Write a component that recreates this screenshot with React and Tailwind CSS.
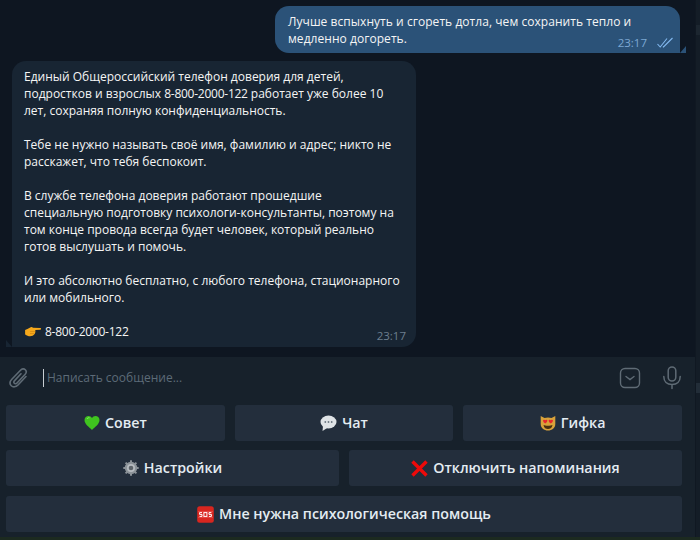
const font = { fontFamily: '"Open Sans", sans-serif' };

function Heart() {
  return (
    <svg width="16" height="16" viewBox="0 0 16 16" className="shrink-0">
      <path d="M8 15 C5 12 0.5 9 0.5 5 C0.5 2.5 2.5 1 4.5 1 C6 1 7.2 1.8 8 3 C8.8 1.8 10 1 11.5 1 C13.5 1 15.5 2.5 15.5 5 C15.5 9 11 12 8 15Z" fill="#3fc41f" />
      <path d="M3 4 C3.5 3 4.5 2.6 5.5 2.8" stroke="#8fe870" strokeWidth="1" fill="none" />
    </svg>
  );
}

function Speech() {
  return (
    <svg width="17" height="17" viewBox="0 0 17 17" className="shrink-0">
      <ellipse cx="8.5" cy="7" rx="8" ry="6.5" fill="#dfe3e6" />
      <path d="M3 11 L2.5 16 L8 12.5Z" fill="#dfe3e6" />
      <circle cx="5.3" cy="7" r="0.9" fill="#6b7680" />
      <circle cx="8.5" cy="7" r="0.9" fill="#6b7680" />
      <circle cx="11.7" cy="7" r="0.9" fill="#6b7680" />
    </svg>
  );
}

function Cat() {
  return (
    <svg width="16" height="16" viewBox="0 0 16 16" className="shrink-0">
      <path d="M0.7 1 L4.5 3 C6.5 2.3 9.5 2.3 11.5 3 L15.3 1 L15.3 9 C15.3 13 12 15.5 8 15.5 C4 15.5 0.7 13 0.7 9Z" fill="#d9a23a" />
      <path d="M3 5.5 a1.3 1.3 0 0 1 2.2 -0.3 a1.3 1.3 0 0 1 2.2 0.3 C7.4 7 5.7 8 5.2 8.6 C4.7 8 3 7 3 5.5Z" fill="#e8262b" />
      <path d="M8.6 5.5 a1.3 1.3 0 0 1 2.2 -0.3 a1.3 1.3 0 0 1 2.2 0.3 C13 7 11.3 8 10.8 8.6 C10.3 8 8.6 7 8.6 5.5Z" fill="#e8262b" />
      <path d="M3.5 10 C5.5 11 10.5 11 12.5 10 C12 13 10 14 8 14 C6 14 4 13 3.5 10Z" fill="#4a3010" />
    </svg>
  );
}

function Gear() {
  return (
    <svg width="16" height="16" viewBox="0 0 16 16" className="shrink-0">
      <circle cx="8" cy="8" r="6.2" fill="#8b9298" />
      <g stroke="#8b9298" strokeWidth="2">
        <path d="M8 0.3 V15.7 M0.3 8 H15.7 M2.6 2.6 L13.4 13.4 M13.4 2.6 L2.6 13.4" />
      </g>
      <circle cx="8" cy="8" r="4" fill="#b6bbc0" />
      <circle cx="8" cy="8" r="2.3" fill="#5c6369" />
    </svg>
  );
}

function Cross() {
  return (
    <svg width="17" height="17" viewBox="0 0 17 17" className="shrink-0">
      <path d="M1.5 1.5 L15.5 15.5 M15.5 1.5 L1.5 15.5" stroke="#ee0a0a" strokeWidth="3.4" />
    </svg>
  );
}

function Sos() {
  return (
    <svg width="17" height="17" viewBox="0 0 17 17" className="shrink-0">
      <rect x="0.2" y="0.2" width="16.6" height="16.6" rx="2.5" fill="#d8261f" />
      <path d="M1 5.6 H16 M1 11.4 H16" stroke="#f0605a" strokeWidth="0.6" />
      <g stroke="#fff" strokeWidth="1" fill="none">
        <path d="M5 6.6 H2.6 V8.4 H5 V10.4 H2.5" />
        <rect x="6.9" y="6.6" width="3" height="3.8" />
        <path d="M14.4 6.6 H12 V8.4 H14.4 V10.4 H11.9" />
      </g>
    </svg>
  );
}

function Pointing() {
  return (
    <svg width="18" height="13" viewBox="0 0 18 14" className="shrink-0">
      <path d="M0.5 5.5 C2 4.5 4 4 5.5 3 C7 2 8 2 9 3 L17 3.2 C18 3.4 18 4.8 17 5 L11.5 5.3 C11.7 7 11.5 9 10.5 10 C9.5 11.5 7 12.5 4.5 12 C2.5 11.6 0.8 10.8 0.5 10Z" fill="#f5a81c" />
      <path d="M6 7 H11 M5.8 9.2 H10.4" stroke="#c97f0c" strokeWidth="0.6" />
    </svg>
  );
}

function KeyButton({ icon, label, className = "" }) {
  return (
    <button className={`flex h-9 min-w-0 items-center justify-center gap-[5px] rounded-[3px] bg-[#232e3c] text-[14.25px] leading-none font-semibold text-[#e4ecf2] ${className}`}>
      {icon}
      <span>{label}</span>
    </button>
  );
}

export default function App() {
  return (
    <div className="flex h-[540px] w-[700px] flex-col overflow-hidden bg-[#17212b]" style={font}>
      <div className="flex min-h-0 flex-1">
        <div className="flex min-w-0 flex-1 flex-col">
          <div className="flex h-[357px] flex-col bg-[#0e1621] pt-[6px] pr-[15px] pl-3">
            <div className="flex justify-end">
              <div className="relative h-[47px] w-[405px] rounded-[14px] rounded-br-none bg-[#2b5278] pt-[7px] pl-[13px] text-[12px] leading-[17px] tracking-[0.05px] text-[#f5f5f5]">
                <p className="whitespace-nowrap">Лучше вспыхнуть и сгореть дотла, чем сохранить тепло и<br />медленно догореть.</p>
                <div className="absolute right-[7px] bottom-[2px] flex items-center gap-[10px] tracking-normal">
                  <span className="text-[11.5px] leading-[16px] text-[#7da8d3]">23:17</span>
                  <svg className="mb-[2px]" width="16" height="11" viewBox="0 0 16 11" fill="none" stroke="#82b8ee" strokeWidth="1.1">
                    <path d="M0.5 7 L3.2 10 L10 1.5" />
                    <path d="M6 9.5 L6.5 10 L15.5 1" />
                  </svg>
                </div>
                <div className="absolute right-[-6px] bottom-0 h-0 w-0 border-b-[7px] border-l-[6px] border-b-[#2b5278] border-l-transparent" />
              </div>
            </div>
            <div className="relative mt-2 h-[286px] w-[404px] rounded-[14px] rounded-bl-none bg-[#182533] px-3 pt-[7px] text-[12px] leading-[17px] whitespace-nowrap text-[#f5f5f5]">
              <p>Единый Общероссийский телефон доверия для детей,<br />подростков и взрослых <span className="tracking-[-0.25px]">8-800-2000-122</span> работает уже более 10<br />лет, сохраняя полную конфиденциальность.</p>
              <p className="mt-[17px]">Тебе не нужно называть своё имя, фамилию и адрес; никто не<br />расскажет, что тебя беспокоит.</p>
              <p className="mt-[17px]">В службе телефона доверия работают прошедшие<br />специальную подготовку психологи-консультанты, поэтому на<br />том конце провода всегда будет человек, который реально<br />готов выслушать и помочь.</p>
              <p className="mt-[17px]">И это абсолютно бесплатно, с любого телефона, стационарного<br />или мобильного.</p>
              <p className="mt-[17px] flex items-center gap-[3px]"><Pointing /><span className="tracking-[-0.25px]">8-800-2000-122</span></p>
              <span className="absolute right-[10px] bottom-[3px] text-[11.5px] leading-[16px] text-[#6d7f8f]">23:17</span>
              <div className="absolute bottom-0 left-[-6px] h-0 w-0 border-r-[6px] border-b-[7px] border-r-transparent border-b-[#182533]" />
            </div>
          </div>
          <div className="flex h-[42px] items-center pr-[13px] pb-px">
            <svg className="ml-[9px] shrink-0" width="20" height="22" viewBox="0 0 20 22" fill="none" stroke="#5f6b75" strokeWidth="1.6" strokeLinecap="round">
              <path d="M17 9.5 L9 18 C6.8 20.3 3.9 20.3 2.3 18.7 C0.6 17 0.8 14.4 2.8 12.3 L11.5 3.2 C13 1.6 15 1.5 16.3 2.8 C17.6 4.1 17.4 6 16 7.5 L8 16 C7.2 16.9 6 17 5.3 16.3 C4.6 15.6 4.8 14.5 5.6 13.6 L12 6.8" />
            </svg>
            <span className="ml-[14px] h-[18px] w-px shrink-0 bg-[#c8ced3]" />
            <span className="ml-[3px] text-[12px] leading-none text-[#5d6b78]">Написать сообщение...</span>
            <svg className="ml-auto shrink-0" width="22" height="22" viewBox="0 0 22 22" fill="none" stroke="#5f6b75" strokeWidth="1.4">
              <rect x="1.5" y="1.5" width="19" height="19" rx="4.5" />
              <path d="M7 9.5 L11 12.5 L15 9.5" strokeLinecap="round" />
            </svg>
            <svg className="ml-[21px] shrink-0" width="20" height="24" viewBox="0 0 20 24" fill="none" stroke="#5f6b75" strokeWidth="1.5" strokeLinecap="round">
              <rect x="6.2" y="1" width="7.6" height="14" rx="3.8" />
              <path d="M1.8 10.5 C1.8 15.5 5 18.5 10 18.5 C15 18.5 18.2 15.5 18.2 10.5 M10 18.5 V22.5" />
            </svg>
          </div>
          <div className="mt-[6px] flex flex-col pr-[13px] pl-[6px]">
            <div className="grid grid-cols-3 gap-[10px]">
              <KeyButton icon={<Heart />} label="Совет" />
              <KeyButton icon={<Speech />} label="Чат" />
              <KeyButton icon={<Cat />} label="Гифка" />
            </div>
            <div className="mt-[9px] grid grid-cols-2 gap-[10px]">
              <KeyButton icon={<Gear />} label="Настройки" />
              <KeyButton icon={<Cross />} label="Отключить напоминания" />
            </div>
            <KeyButton icon={<Sos />} label="Мне нужна психологическая помощь" className="mt-[10px]" />
          </div>
        </div>
        <div className="w-[5px] shrink-0 border-l border-[#101822] bg-[#141d27]">
          <div className="mt-[25px] h-[10px] bg-[#1c2630]" />
          <div className="mt-[348px] h-[10px] bg-[#222d38]" />
        </div>
      </div>
      <div className="h-[3px] shrink-0 bg-[#1c2a20]" />
    </div>
  );
}
